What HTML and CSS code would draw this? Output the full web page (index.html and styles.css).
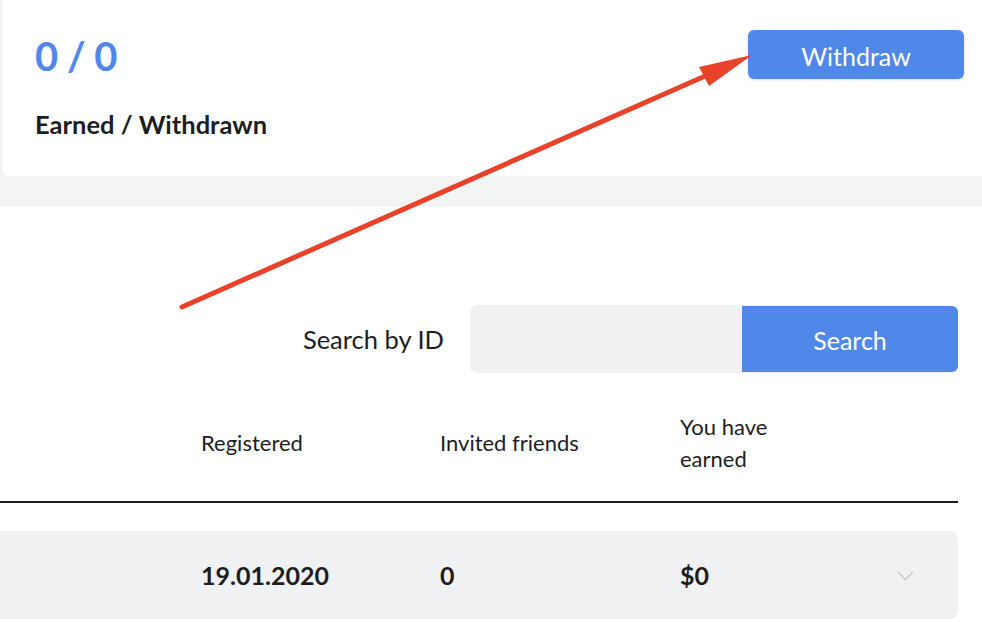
FILE: index.html
```html
<!DOCTYPE html>
<html lang="en">
<head>
    <meta charset="UTF-8">
    <meta name="viewport" content="width=device-width, initial-scale=1.0">
    <title>Referral Program</title>
    <link rel="stylesheet" href="styles.css">
</head>
<body>
    <div class="summary">
        <div class="summary-info">
            <div class="summary-total">0 / 0</div>
            <div class="summary-label">Earned / Withdrawn</div>
        </div>
        <button class="withdraw-btn">Withdraw</button>
    </div>

    <div class="content">
        <form class="search" onsubmit="return false">
            <label class="search-label" for="search-id">Search by ID</label>
            <div class="search-box">
                <input class="search-input" id="search-id" type="text">
                <button class="search-btn">Search</button>
            </div>
        </form>

        <div class="table">
            <div class="table-head">
                <div></div>
                <div>Registered</div>
                <div>Invited friends</div>
                <div>You have<br>earned</div>
                <div></div>
            </div>
            <div class="table-row">
                <div></div>
                <div>19.01.2020</div>
                <div>0</div>
                <div>$0</div>
                <div class="chevron">
                    <svg width="17" height="11" viewBox="0 0 17 11">
                        <path d="M1 2 L8.5 9.5 L16 2" fill="none" stroke="#c3c7cf" stroke-width="1.4"/>
                    </svg>
                </div>
            </div>
        </div>
    </div>

    <!-- annotation arrow -->
    <svg class="arrow" width="982" height="622" viewBox="0 0 982 622">
        <line x1="182" y1="307" x2="712" y2="73" stroke="#e8432a" stroke-width="5" stroke-linecap="round"/>
        <polygon points="752,55 699,67 709,86" fill="#e8432a"/>
    </svg>
</body>
</html>
```

FILE: styles.css
```css
body {
    font-family: Lato, "Open Sans", sans-serif;
    background: #f3f4f4;
    margin: 0;
    color: #1d1d1f;
    overflow: hidden;
}

.summary {
    background: white;
    margin-left: 2px;
    height: 176px;
    border-bottom-left-radius: 8px;
    display: flex;
    justify-content: space-between;
    align-items: flex-start;
    padding: 0 18px 0 33px;
    box-sizing: border-box;
}

.summary-total {
    font-size: 40px;
    font-weight: bold;
    color: #5088ea;
    line-height: 1;
    margin-top: 36px;
    letter-spacing: -0.5px;
}

.summary-label {
    font-size: 25.5px;
    font-weight: bold;
    margin-top: 33px;
}

.withdraw-btn {
    margin-top: 30px;
    width: 216px;
    height: 49px;
    background: #5088ea;
    color: white;
    border: none;
    border-radius: 6px;
    font-family: inherit;
    font-size: 25px;
    padding-top: 3px;
    box-shadow: 0 1px 3px rgba(0,0,0,0.15);
    cursor: pointer;
}

.content {
    background: white;
    margin-top: 31px;
    padding: 98px 24px 0 0;
    height: 317px;
}

.search {
    display: flex;
    justify-content: flex-end;
    align-items: center;
    gap: 26px;
}

.search-label {
    font-size: 25.5px;
}

.search-box {
    display: flex;
    align-items: center;
    background: #f0f1f3;
    border-radius: 8px;
}

.search-input {
    width: 272px;
    height: 68px;
    border: none;
    background: transparent;
    padding: 0 16px;
    box-sizing: border-box;
    font-family: inherit;
    font-size: 22px;
}

.search-btn {
    width: 216px;
    height: 66px;
    background: #5088ea;
    color: white;
    border: none;
    border-radius: 0 6px 6px 0;
    font-family: inherit;
    font-size: 25px;
    padding-top: 2px;
    cursor: pointer;
}

.table {
    margin-top: 38px;
}

.table-head,
.table-row {
    display: grid;
    grid-template-columns: 201px 239px 240px 1fr 106px;
    align-items: center;
    font-size: 22px;
}

.table-head {
    line-height: 32px;
    padding-bottom: 26px;
    border-bottom: 2px solid #1d1d1f;
}

.table-row {
    margin-top: 28px;
    height: 88px;
    background: #f0f1f3;
    border-radius: 0 8px 8px 0;
    font-weight: bold;
    font-size: 25px;
}

.chevron {
    display: flex;
    justify-content: center;
}

.arrow {
    position: absolute;
    top: 0;
    left: 0;
    pointer-events: none;
}
```
